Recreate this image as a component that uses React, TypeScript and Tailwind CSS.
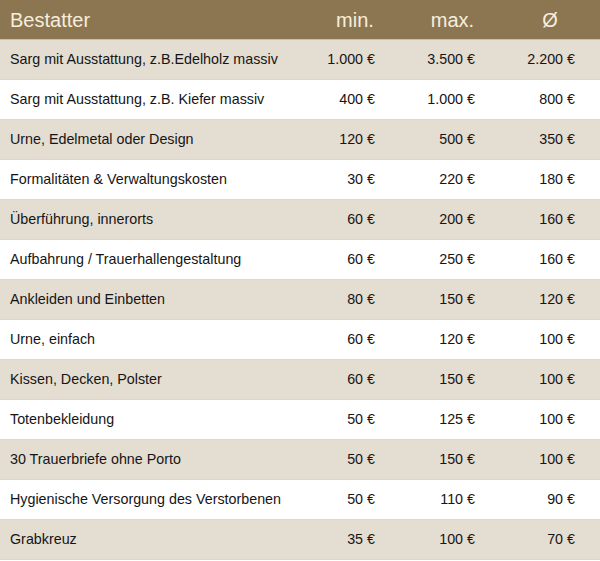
const rows: ReadonlyArray<[string, string, string, string]> = [
  ["Sarg mit Ausstattung, z.B.Edelholz massiv", "1.000 €", "3.500 €", "2.200 €"],
  ["Sarg mit Ausstattung, z.B. Kiefer massiv", "400 €", "1.000 €", "800 €"],
  ["Urne, Edelmetal oder Design", "120 €", "500 €", "350 €"],
  ["Formalitäten & Verwaltungskosten", "30 €", "220 €", "180 €"],
  ["Überführung, innerorts", "60 €", "200 €", "160 €"],
  ["Aufbahrung / Trauerhallengestaltung", "60 €", "250 €", "160 €"],
  ["Ankleiden und Einbetten", "80 €", "150 €", "120 €"],
  ["Urne, einfach", "60 €", "120 €", "100 €"],
  ["Kissen, Decken, Polster", "60 €", "150 €", "100 €"],
  ["Totenbekleidung", "50 €", "125 €", "100 €"],
  ["30 Trauerbriefe ohne Porto", "50 €", "150 €", "100 €"],
  ["Hygienische Versorgung des Verstorbenen", "50 €", "110 €", "90 €"],
  ["Grabkreuz", "35 €", "100 €", "70 €"],
];

const grid = "grid grid-cols-[300px_100px_100px_100px] items-center h-10 box-border border-b";

export default function App() {
  return (
    <div className="w-[600px] bg-white font-['Liberation_Sans',Arial,sans-serif]">
      <div className={`${grid} bg-[#8c7651] border-[#cbbfa9] text-[20px] text-[#f6eedc]`}>
        <div className="pl-[10px]">Bestatter</div>
        <div className="text-center pl-[10px]">min.</div>
        <div className="text-center pl-[5px]">max.</div>
        <div className="text-center">Ø</div>
      </div>
      {rows.map(([label, min, max, avg], i) => (
        <div
          key={label}
          className={`${grid} border-[#dcd7d0] text-[14.3px] text-[#151515] ${i % 2 === 0 ? "bg-[#e4ddd2]" : "bg-white"}`}
        >
          <div className="pl-[10px]">{label}</div>
          <div className="text-right pr-[25px]">{min}</div>
          <div className="text-right pr-[25px]">{max}</div>
          <div className="text-right pr-[25px]">{avg}</div>
        </div>
      ))}
    </div>
  );
}
